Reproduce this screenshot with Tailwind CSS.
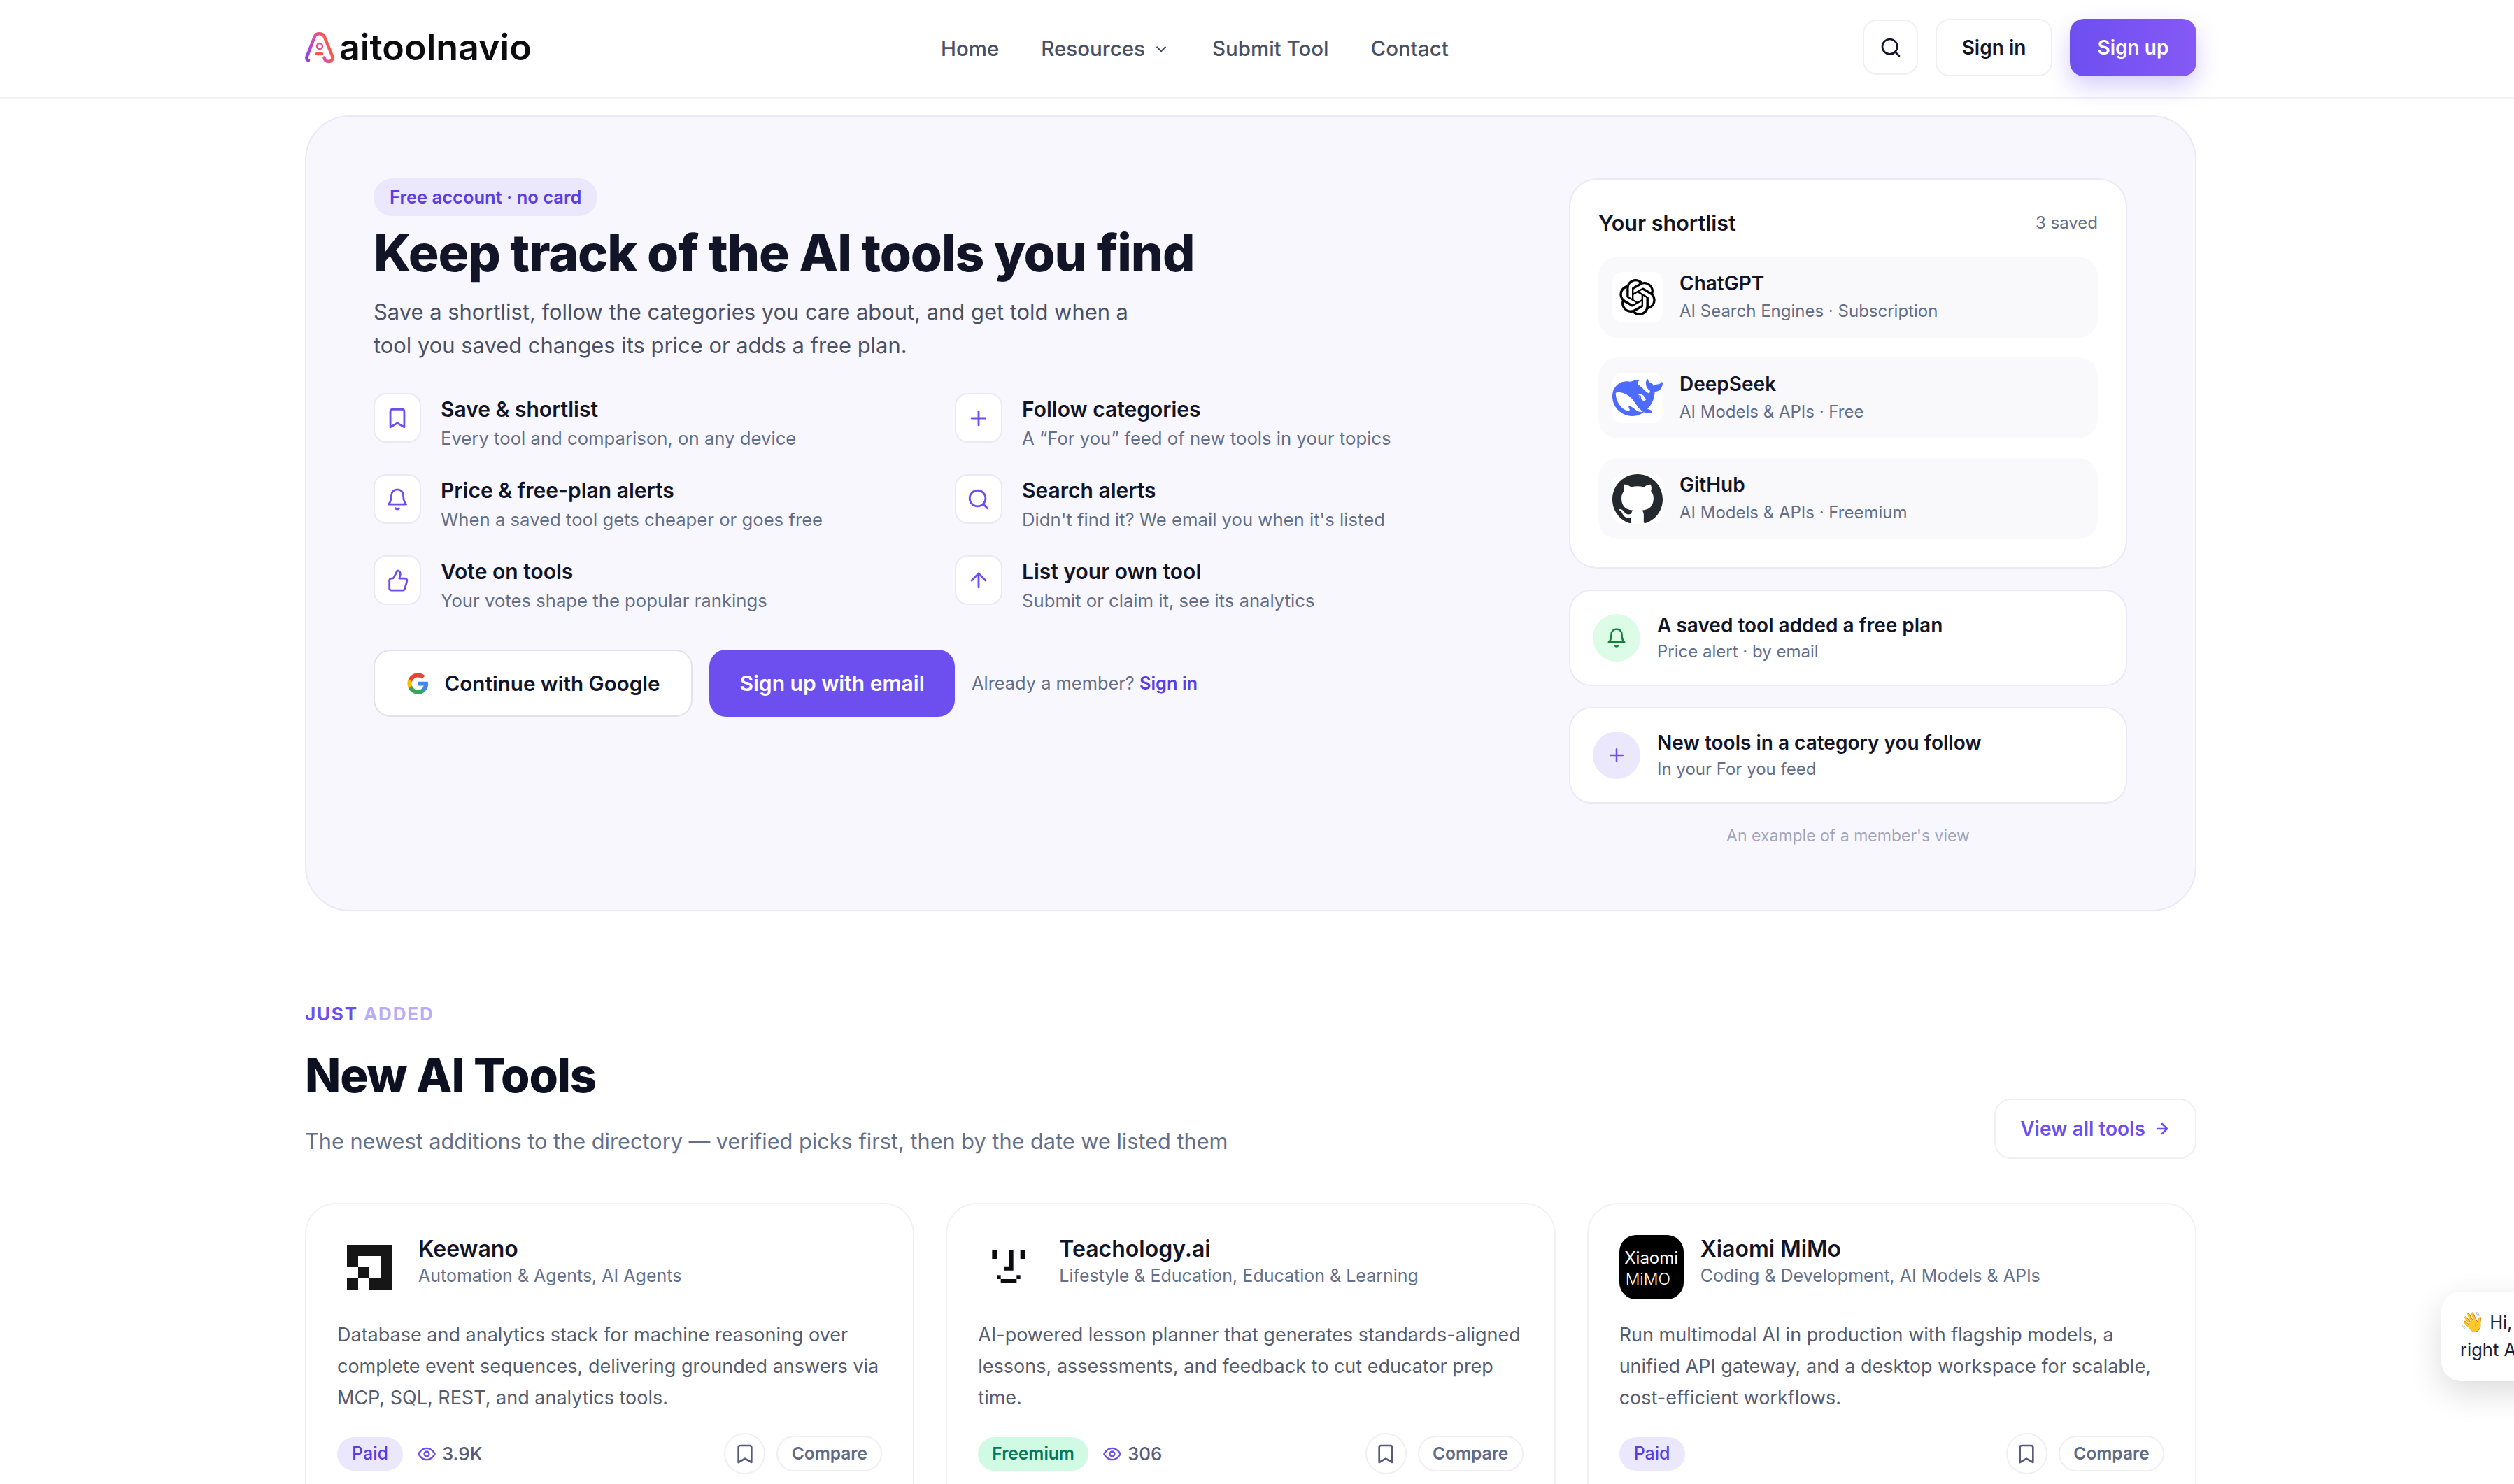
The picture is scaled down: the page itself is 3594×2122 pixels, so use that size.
<!DOCTYPE html>
<html lang="en">
  <head>
    <meta charset="UTF-8" />
    <meta name="viewport" content="width=device-width, initial-scale=1.0" />
    <script src="https://cdn.jsdelivr.net/npm/@tailwindcss/browser@4"></script>
    <title>aitoolnavio</title>
  </head>
  <body class="relative h-[2122px] overflow-hidden bg-white font-['Inter',sans-serif] text-[#111527]">
    <!-- header -->
    <header class="flex h-[141px] items-center justify-between border-b-2 border-[#f2f2f5] pl-[436px] pr-[454px]">
      <a class="-mt-[3px] flex w-[909px] items-center gap-[7px]">
        <svg class="h-[46px] w-[42px]" viewBox="0 0 42 46" fill="none">
          <defs>
            <linearGradient id="lg" x1="0" y1="1" x2="1" y2="0.6">
              <stop offset="0" stop-color="#8b3de8" />
              <stop offset="0.55" stop-color="#d94fb0" />
              <stop offset="1" stop-color="#ff5a3c" />
            </linearGradient>
          </defs>
          <path d="M5 41c-2 0-3-2-2.600-4L14 7c2-5 11-5 13.500 0L39 35c1.500 4-1 8-5 8-5 0-6-3-6.500-5.500" stroke="url(#lg)" stroke-width="4.500" stroke-linecap="round" />
          <path d="M17 32h7" stroke="#ff5a3c" stroke-width="4.500" stroke-linecap="round" />
          <circle cx="21" cy="21" r="4" stroke="#ee4f8f" stroke-width="2.500" />
        </svg>
        <span class="text-[52px] leading-none font-semibold text-[#0b0b10]">aitoolnavio</span>
      </a>
      <nav class="flex items-center gap-[60px] text-[29.5px] font-medium text-[#4a4f63]">
        <a>Home</a>
        <a class="flex items-center gap-[10px]">Resources
          <svg class="h-[26px] w-[26px]" viewBox="0 0 24 24" fill="none" stroke="currentColor" stroke-width="2"><path d="m6 9 6 6 6-6" /></svg>
        </a>
        <a>Submit Tool</a>
        <a>Contact</a>
      </nav>
      <div class="-mt-[4px] flex flex-1 items-center justify-end gap-[25px]">
        <button class="flex h-[79px] w-[79px] items-center justify-center rounded-[20px] border-2 border-[#f0f0f4] bg-white">
          <svg class="h-[32px] w-[32px]" viewBox="0 0 24 24" fill="none" stroke="#111527" stroke-width="2" stroke-linecap="round"><circle cx="11" cy="11" r="8" /><path d="m21 21-4.300-4.300" /></svg>
        </button>
        <button class="h-[82px] w-[167px] rounded-[20px] border-2 border-[#f0f0f4] bg-white text-[28px] font-semibold">Sign in</button>
        <button class="h-[82px] w-[181px] rounded-[20px] bg-gradient-to-r from-[#6d4ff0] to-[#8559f6] text-[28px] font-semibold text-white shadow-[0_14px_32px_rgba(109,79,240,0.28)]">Sign up</button>
      </div>
    </header>

    <main class="px-[436px] pr-[454px] pt-[24px]">
      <!-- hero -->
      <section class="flex h-[1138px] justify-between rounded-[64px] border-2 border-[#ebe9f8] bg-[#f8f7fe] pt-[88px] pr-[97px] pl-[96px]">
        <div class="w-[1662px]">
          <span class="inline-flex h-[54px] items-center rounded-full bg-[#ebe7fd] px-[23px] text-[25.5px] font-semibold text-[#5b3de0]">Free account · no card</span>
          <h1 class="mt-[8px] text-[73px] leading-[90px] font-extrabold tracking-[-0.016em] text-[#111527]">Keep track of the AI tools you find</h1>
          <p class="mt-[15px] w-[1120px] text-[30.9px] leading-[48px] text-[#4b5165]">Save a shortlist, follow the categories you care about, and get told when a tool you saved changes its price or adds a free plan.</p>

          <div class="mt-[44px] grid grid-cols-2 gap-y-[32px]">
            <div class="flex gap-[28px]">
              <span class="flex h-[71px] w-[68px] shrink-0 items-center justify-center rounded-[18px] border-2 border-[#ebe9f8] bg-white">
                <svg class="h-[34px] w-[34px]" viewBox="0 0 24 24" fill="none" stroke="#6d4ff0" stroke-width="2" stroke-linejoin="round"><path d="m19 21-7-4-7 4V5a2 2 0 0 1 2-2h10a2 2 0 0 1 2 2v16z" /></svg>
              </span>
              <div class="pt-[4px]">
                <div class="text-[30px] leading-[38px] font-semibold">Save &amp; shortlist</div>
                <div class="mt-[4px] text-[25.7px] leading-[38px] text-[#646e87]">Every tool and comparison, on any device</div>
              </div>
            </div>
            <div class="flex gap-[28px]">
              <span class="flex h-[71px] w-[68px] shrink-0 items-center justify-center rounded-[18px] border-2 border-[#ebe9f8] bg-white">
                <svg class="h-[34px] w-[34px]" viewBox="0 0 24 24" fill="none" stroke="#6d4ff0" stroke-width="2" stroke-linecap="round"><path d="M5 12h14M12 5v14" /></svg>
              </span>
              <div class="pt-[4px]">
                <div class="text-[30px] leading-[38px] font-semibold">Follow categories</div>
                <div class="mt-[4px] text-[25.7px] leading-[38px] text-[#646e87]">A “For you” feed of new tools in your topics</div>
              </div>
            </div>
            <div class="flex gap-[28px]">
              <span class="flex h-[71px] w-[68px] shrink-0 items-center justify-center rounded-[18px] border-2 border-[#ebe9f8] bg-white">
                <svg class="h-[34px] w-[34px]" viewBox="0 0 24 24" fill="none" stroke="#6d4ff0" stroke-width="2" stroke-linecap="round" stroke-linejoin="round"><path d="M6 8a6 6 0 0 1 12 0c0 7 3 9 3 9H3s3-2 3-9" /><path d="M10.300 21a1.940 1.940 0 0 0 3.400 0" /></svg>
              </span>
              <div class="pt-[4px]">
                <div class="text-[30px] leading-[38px] font-semibold">Price &amp; free-plan alerts</div>
                <div class="mt-[4px] text-[25.7px] leading-[38px] text-[#646e87]">When a saved tool gets cheaper or goes free</div>
              </div>
            </div>
            <div class="flex gap-[28px]">
              <span class="flex h-[71px] w-[68px] shrink-0 items-center justify-center rounded-[18px] border-2 border-[#ebe9f8] bg-white">
                <svg class="h-[34px] w-[34px]" viewBox="0 0 24 24" fill="none" stroke="#6d4ff0" stroke-width="2" stroke-linecap="round"><circle cx="11" cy="11" r="8" /><path d="m21 21-4.300-4.300" /></svg>
              </span>
              <div class="pt-[4px]">
                <div class="text-[30px] leading-[38px] font-semibold">Search alerts</div>
                <div class="mt-[4px] text-[25.7px] leading-[38px] text-[#646e87]">Didn't find it? We email you when it's listed</div>
              </div>
            </div>
            <div class="flex gap-[28px]">
              <span class="flex h-[71px] w-[68px] shrink-0 items-center justify-center rounded-[18px] border-2 border-[#ebe9f8] bg-white">
                <svg class="h-[34px] w-[34px]" viewBox="0 0 24 24" fill="none" stroke="#6d4ff0" stroke-width="2" stroke-linecap="round" stroke-linejoin="round"><path d="M15 5.880 14 10h5.830a2 2 0 0 1 1.920 2.560l-2.330 8A2 2 0 0 1 17.500 22H6a2 2 0 0 1-2-2v-8a2 2 0 0 1 2-2h.760a2 2 0 0 0 1.790-1.110L12 2a3.130 3.130 0 0 1 3 3.880Z" /></svg>
              </span>
              <div class="pt-[4px]">
                <div class="text-[30px] leading-[38px] font-semibold">Vote on tools</div>
                <div class="mt-[4px] text-[25.7px] leading-[38px] text-[#646e87]">Your votes shape the popular rankings</div>
              </div>
            </div>
            <div class="flex gap-[28px]">
              <span class="flex h-[71px] w-[68px] shrink-0 items-center justify-center rounded-[18px] border-2 border-[#ebe9f8] bg-white">
                <svg class="h-[34px] w-[34px]" viewBox="0 0 24 24" fill="none" stroke="#6d4ff0" stroke-width="2" stroke-linecap="round" stroke-linejoin="round"><path d="m5 12 7-7 7 7" /><path d="M12 19V5" /></svg>
              </span>
              <div class="pt-[4px]">
                <div class="text-[30px] leading-[38px] font-semibold">List your own tool</div>
                <div class="mt-[4px] text-[25.7px] leading-[38px] text-[#646e87]">Submit or claim it, see its analytics</div>
              </div>
            </div>
          </div>

          <div class="mt-[51px] flex items-center">
            <button class="flex h-[96px] w-[456px] items-center justify-center gap-[22px] rounded-[24px] border-2 border-[#e3e2ea] bg-white text-[29.6px] font-semibold">
              <svg class="h-[33px] w-[33px]" viewBox="0 0 24 24">
                <path fill="#4285F4" d="M22.560 12.250c0-.780-.070-1.530-.200-2.250H12v4.260h5.920c-.260 1.370-1.040 2.530-2.080 3.230v2.770h3.570c2.080-1.920 3.280-4.740 3.280-8.010z" />
                <path fill="#34A853" d="M12 23c2.970 0 5.460-.980 7.280-2.660l-3.570-2.770c-.980.660-2.230 1.060-3.710 1.060-2.860 0-5.290-1.930-6.160-4.530H2.180v2.840C3.990 20.530 7.700 23 12 23z" />
                <path fill="#FBBC05" d="M5.840 14.090c-.220-.660-.350-1.360-.350-2.090s.130-1.430.350-2.090V7.070H2.180C1.430 8.550 1 10.220 1 12s.430 3.450 1.180 4.930l2.850-2.220.810-.620z" />
                <path fill="#EA4335" d="M12 5.380c1.620 0 3.060.560 4.210 1.640l3.150-3.150C17.450 2.090 14.970 1 12 1 7.700 1 3.990 3.470 2.180 7.070l3.660 2.840c.870-2.600 3.300-4.530 6.160-4.530z" />
              </svg>
              Continue with Google
            </button>
            <button class="ml-[24px] h-[96px] w-[351px] rounded-[24px] bg-[#6d4ff0] text-[30px] font-semibold text-white">Sign up with email</button>
            <span class="ml-[24px] text-[25.4px] text-[#646e87]">Already a member? <a class="font-semibold text-[#5b3de0]">Sign in</a></span>
          </div>
        </div>

        <!-- member preview -->
        <aside class="w-[798px] shrink-0">
          <div class="h-[558px] rounded-[40px] border-2 border-[#ebe9f8] bg-white px-[40px] pt-[39px]">
            <div class="flex items-center justify-between">
              <span class="text-[30.5px] font-semibold">Your shortlist</span>
              <span class="text-[24px] text-[#646e87]">3 saved</span>
            </div>
            <div class="mt-[25px] space-y-[28px]">
              <div class="flex h-[116px] items-center gap-[24px] rounded-[28px] bg-[#f9f9fc] px-[20px]">
                <span class="flex h-[72px] w-[72px] items-center justify-center rounded-[14px] bg-white">
                  <svg class="h-[52px] w-[52px]" viewBox="0 0 24 24" fill="#000"><path d="M22.282 9.821a5.985 5.985 0 0 0-.516-4.911 6.046 6.046 0 0 0-6.510-2.900A6.065 6.065 0 0 0 4.981 4.182a5.985 5.985 0 0 0-3.998 2.900 6.046 6.046 0 0 0 .743 7.097 5.980 5.980 0 0 0 .511 4.911 6.051 6.051 0 0 0 6.515 2.900A5.985 5.985 0 0 0 13.260 24a6.056 6.056 0 0 0 5.772-4.206 5.990 5.990 0 0 0 3.998-2.900 6.056 6.056 0 0 0-.748-7.073zM13.260 22.430a4.476 4.476 0 0 1-2.876-1.041l.142-.081 4.778-2.758a.795.795 0 0 0 .393-.681v-6.737l2.020 1.169a.071.071 0 0 1 .038.052v5.583a4.504 4.504 0 0 1-4.495 4.494zM3.600 18.304a4.471 4.471 0 0 1-.535-3.014l.142.085 4.783 2.759a.771.771 0 0 0 .781 0l5.843-3.369v2.333a.080.080 0 0 1-.033.061L9.740 19.950a4.499 4.499 0 0 1-6.141-1.646zM2.341 7.896a4.485 4.485 0 0 1 2.366-1.973V11.600a.766.766 0 0 0 .388.677l5.814 3.354-2.020 1.169a.076.076 0 0 1-.071 0l-4.830-2.787A4.504 4.504 0 0 1 2.340 7.872zm16.597 3.855-5.833-3.387L15.119 7.200a.076.076 0 0 1 .071 0l4.830 2.791a4.494 4.494 0 0 1-.676 8.105v-5.678a.790.790 0 0 0-.407-.667zm2.010-3.023-.142-.085-4.774-2.782a.776.776 0 0 0-.785 0L9.409 9.230V6.897a.066.066 0 0 1 .028-.061l4.830-2.787a4.499 4.499 0 0 1 6.680 4.660zM8.307 12.863l-2.020-1.164a.080.080 0 0 1-.038-.057V6.074a4.499 4.499 0 0 1 7.376-3.454l-.142.081L8.704 5.459a.795.795 0 0 0-.393.681zm1.097-2.365 2.602-1.500 2.607 1.500v2.999l-2.597 1.500-2.607-1.500Z" /></svg>
                </span>
                <div>
                  <div class="text-[28px] leading-[38px] font-semibold">ChatGPT</div>
                  <div class="mt-[3px] text-[24px] leading-[36px] text-[#646e87]">AI Search Engines · Subscription</div>
                </div>
              </div>
              <div class="flex h-[116px] items-center gap-[24px] rounded-[28px] bg-[#f9f9fc] px-[20px]">
                <span class="flex h-[72px] w-[72px] items-center justify-center rounded-[14px] bg-white">
                  <svg class="h-[72px] w-[72px]" viewBox="0 0 24 24" fill="#4d6bfe"><path d="M23.748 4.482c-.254-.124-.364.113-.512.234-.051.039-.094.090-.137.136-.372.397-.806.657-1.373.626-.829-.046-1.537.214-2.163.848-.133-.782-.575-1.248-1.247-1.548-.352-.156-.708-.311-.955-.650-.172-.241-.219-.510-.305-.774-.055-.160-.110-.323-.293-.350-.200-.031-.278.136-.356.276-.313.572-.434 1.202-.422 1.840.027 1.436.633 2.580 1.838 3.393.137.093.172.187.129.323-.082.280-.180.552-.266.833-.055.179-.137.217-.329.140a5.526 5.526 0 0 1-1.736-1.180c-.857-.828-1.631-1.742-2.597-2.458a11.365 11.365 0 0 0-.689-.471c-.985-.957.130-1.743.388-1.836.270-.098.093-.432-.779-.428-.872.004-1.670.295-2.687.684a3.055 3.055 0 0 1-.465.137 9.597 9.597 0 0 0-2.883-.102c-1.885.210-3.390 1.102-4.497 2.623C.082 8.606-.231 10.684.152 12.850c.403 2.284 1.569 4.175 3.360 5.653 1.858 1.533 3.997 2.284 6.438 2.140 1.482-.085 3.133-.284 4.994-1.860.470.234.962.327 1.780.397.630.059 1.236-.030 1.705-.128.735-.156.684-.837.419-.961-2.155-1.004-1.682-.595-2.113-.926 1.096-1.296 2.746-2.642 3.392-7.003.050-.347.007-.565 0-.845-.004-.170.035-.237.230-.256a4.173 4.173 0 0 0 1.545-.475c1.396-.763 1.960-2.015 2.093-3.517.020-.230-.004-.467-.247-.588zM11.581 18c-2.089-1.642-3.102-2.183-3.520-2.160-.392.024-.321.471-.235.763.090.288.207.486.371.739.114.167.192.416-.113.603-.673.416-1.842-.140-1.897-.167-1.361-.802-2.500-1.860-3.301-3.307-.774-1.393-1.224-2.887-1.298-4.482-.020-.386.093-.522.477-.592a4.696 4.696 0 0 1 1.529-.039c2.132.312 3.946 1.265 5.468 2.774.868.860 1.525 1.887 2.202 2.891.720 1.066 1.494 2.082 2.480 2.914.348.292.625.514.891.677-.802.090-2.140.110-3.054-.614zm1-6.440a.306.306 0 0 1 .415-.287.302.302 0 0 1 .200.288.306.306 0 0 1-.310.307.303.303 0 0 1-.304-.308zm3.110 1.596c-.200.081-.399.151-.590.160a1.245 1.245 0 0 1-.798-.254c-.274-.230-.470-.358-.552-.758a1.730 1.730 0 0 1 .016-.588c.070-.327-.008-.537-.239-.727-.187-.156-.426-.199-.688-.199a.559.559 0 0 1-.254-.078c-.110-.054-.200-.190-.114-.358.028-.054.160-.186.192-.210.356-.202.767-.136 1.146.016.352.144.618.408 1.001.782.391.451.462.576.685.914.176.265.336.537.445.848.067.195-.019.354-.250.452z" /></svg>
                </span>
                <div>
                  <div class="text-[28px] leading-[38px] font-semibold">DeepSeek</div>
                  <div class="mt-[3px] text-[24px] leading-[36px] text-[#646e87]">AI Models &amp; APIs · Free</div>
                </div>
              </div>
              <div class="flex h-[116px] items-center gap-[24px] rounded-[28px] bg-[#f9f9fc] px-[20px]">
                <span class="flex h-[72px] w-[72px] items-center justify-center rounded-[14px] bg-white">
                  <svg class="h-[72px] w-[72px]" viewBox="0 0 24 24" fill="#24292f"><path d="M12 .297c-6.630 0-12 5.373-12 12 0 5.303 3.438 9.800 8.205 11.385.600.113.820-.258.820-.577 0-.285-.010-1.040-.015-2.040-3.338.724-4.042-1.610-4.042-1.610C4.422 18.070 3.633 17.700 3.633 17.700c-1.087-.744.084-.729.084-.729 1.205.084 1.838 1.236 1.838 1.236 1.070 1.835 2.809 1.305 3.495.998.108-.776.417-1.305.760-1.605-2.665-.300-5.466-1.332-5.466-5.930 0-1.310.465-2.380 1.235-3.220-.135-.303-.540-1.523.105-3.176 0 0 1.005-.322 3.300 1.230.960-.267 1.980-.399 3-.405 1.020.006 2.040.138 3 .405 2.280-1.552 3.285-1.230 3.285-1.230.645 1.653.240 2.873.120 3.176.765.840 1.230 1.910 1.230 3.220 0 4.610-2.805 5.625-5.475 5.920.420.360.810 1.096.810 2.220 0 1.606-.015 2.896-.015 3.286 0 .315.210.690.825.570C20.565 22.092 24 17.592 24 12.297c0-6.627-5.373-12-12-12" /></svg>
                </span>
                <div>
                  <div class="text-[28px] leading-[38px] font-semibold">GitHub</div>
                  <div class="mt-[3px] text-[24px] leading-[36px] text-[#646e87]">AI Models &amp; APIs · Freemium</div>
                </div>
              </div>
            </div>
          </div>

          <div class="mt-[30px] flex h-[138px] items-center gap-[24px] rounded-[32px] border-2 border-[#ebe9f8] bg-white px-[32px]">
            <span class="flex h-[68px] w-[68px] items-center justify-center rounded-full bg-[#dcfce7]">
              <svg class="h-[30px] w-[30px]" viewBox="0 0 24 24" fill="none" stroke="#15803d" stroke-width="2" stroke-linecap="round" stroke-linejoin="round"><path d="M6 8a6 6 0 0 1 12 0c0 7 3 9 3 9H3s3-2 3-9" /><path d="M10.300 21a1.940 1.940 0 0 0 3.400 0" /></svg>
            </span>
            <div>
              <div class="text-[28px] leading-[38px] font-semibold">A saved tool added a free plan</div>
              <div class="mt-[1px] text-[24px] leading-[36px] text-[#646e87]">Price alert · by email</div>
            </div>
          </div>
          <div class="mt-[30px] flex h-[138px] items-center gap-[24px] rounded-[32px] border-2 border-[#ebe9f8] bg-white px-[32px]">
            <span class="flex h-[68px] w-[68px] items-center justify-center rounded-full bg-[#ebe7fd]">
              <svg class="h-[30px] w-[30px]" viewBox="0 0 24 24" fill="none" stroke="#6d4ff0" stroke-width="2" stroke-linecap="round"><path d="M5 12h14M12 5v14" /></svg>
            </span>
            <div>
              <div class="text-[28px] leading-[38px] font-semibold">New tools in a category you follow</div>
              <div class="mt-[1px] text-[24px] leading-[36px] text-[#646e87]">In your For you feed</div>
            </div>
          </div>
          <p class="mt-[29px] text-center text-[23px] text-[#9fa5bb]">An example of a member's view</p>
        </aside>
      </section>

      <!-- new tools -->
      <section class="mt-[130px]">
        <div class="flex items-end justify-between">
          <div>
            <div class="text-[26px] leading-[34px] font-bold tracking-[0.07em] text-[#6d4ff0]">JUST <span class="text-[#b9acf8]">ADDED</span></div>
            <h2 class="mt-[31px] text-[67px] leading-[80px] font-extrabold tracking-[-0.016em] text-[#0d1020]">New AI Tools</h2>
            <p class="mt-[32px] text-[30.7px] leading-[44px] text-[#64708a]">The newest additions to the directory — verified picks first, then by the date we listed them</p>
          </div>
          <a class="mb-[-3px] flex h-[86px] w-[289px] items-center justify-center gap-[12px] rounded-[24px] border-2 border-[#f0f0f4] text-[28px] font-semibold text-[#6d4ff0]">View all tools
            <svg class="h-[24px] w-[24px]" viewBox="0 0 24 24" fill="none" stroke="currentColor" stroke-width="2.500" stroke-linecap="round" stroke-linejoin="round"><path d="M5 12h14" /><path d="m12 5 7 7-7 7" /></svg>
          </a>
        </div>

        <div class="mt-[66px] grid grid-cols-3 gap-[45px]">
          <article class="h-[500px] rounded-[44px] border-2 border-[#f1f1f4] bg-white px-[44px] pt-[44px]">
            <div class="flex items-start gap-[24px]">
              <span class="flex h-[92px] w-[92px] shrink-0 items-center justify-center">
                <svg class="h-[64px] w-[64px]" viewBox="0 0 4 4" fill="#161616"><path d="M0 0h4v4H2V3h1V1H1v1H0z" /><path d="M1 2h1v1H1z" /><path d="M0 3h1v1H0z" /></svg>
              </span>
              <div>
                <div class="text-[32px] leading-[40px] font-semibold">Keewano</div>
                <div class="text-[25px] leading-[36px] text-[#64708a]">Automation &amp; Agents, AI Agents</div>
              </div>
            </div>
            <p class="mt-[28px] text-[27px] leading-[45px] text-[#565c6e]">Database and analytics stack for machine reasoning over complete event sequences, delivering grounded answers via MCP, SQL, REST, and analytics tools.</p>
            <div class="mt-[28px] flex items-center">
              <span class="flex h-[48px] items-center rounded-full bg-[#ebe7fd] px-[21px] text-[25px] font-medium text-[#5b3de0]">Paid</span>
              <svg class="ml-[20px] h-[28px] w-[28px]" viewBox="0 0 24 24" fill="none" stroke="#6d4ff0" stroke-width="2"><path d="M2 12s3.500-7 10-7 10 7 10 7-3.500 7-10 7-10-7-10-7Z" /><circle cx="12" cy="12" r="3" /></svg>
              <span class="ml-[8px] text-[26px] font-medium text-[#565c7a]">3.9K</span>
              <button class="ml-auto flex h-[59px] w-[59px] items-center justify-center rounded-full border-2 border-[#f0f0f4]">
                <svg class="h-[32px] w-[32px]" viewBox="0 0 24 24" fill="none" stroke="#565c7a" stroke-width="2" stroke-linejoin="round"><path d="m19 21-7-4-7 4V5a2 2 0 0 1 2-2h10a2 2 0 0 1 2 2v16z" /></svg>
              </button>
              <button class="ml-[16px] h-[51px] w-[151px] rounded-full border-2 border-[#f0f0f4] text-[24.5px] font-semibold text-[#5f6a85]">Compare</button>
            </div>
          </article>

          <article class="h-[500px] rounded-[44px] border-2 border-[#f1f1f4] bg-white px-[44px] pt-[44px]">
            <div class="flex items-start gap-[24px]">
              <span class="flex h-[92px] w-[92px] shrink-0 items-center justify-center">
                <svg class="h-[92px] w-[92px]" viewBox="6 6 276 276" fill="#0b0b10"><path d="M67 70h21v38H67z" /><path d="M188 70h20v38h-20z" /><path d="M138 70h20v88h-38v-18h18z" /><path d="M88 178h16v17H88z" /><path d="M172 178h16v17h-16z" /><path d="M104 195h68v17h-68z" /></svg>
              </span>
              <div>
                <div class="text-[32px] leading-[40px] font-semibold">Teachology.ai</div>
                <div class="text-[25px] leading-[36px] text-[#64708a]">Lifestyle &amp; Education, Education &amp; Learning</div>
              </div>
            </div>
            <p class="mt-[28px] text-[27px] leading-[45px] text-[#565c6e]">AI-powered lesson planner that generates standards-aligned lessons, assessments, and feedback to cut educator prep time.</p>
            <div class="mt-[28px] flex items-center">
              <span class="flex h-[48px] items-center rounded-full bg-[#d1fae5] px-[20px] text-[24.5px] font-semibold text-[#047857]">Freemium</span>
              <svg class="ml-[20px] h-[28px] w-[28px]" viewBox="0 0 24 24" fill="none" stroke="#6d4ff0" stroke-width="2"><path d="M2 12s3.500-7 10-7 10 7 10 7-3.500 7-10 7-10-7-10-7Z" /><circle cx="12" cy="12" r="3" /></svg>
              <span class="ml-[8px] text-[26px] font-medium text-[#565c7a]">306</span>
              <button class="ml-auto flex h-[59px] w-[59px] items-center justify-center rounded-full border-2 border-[#f0f0f4]">
                <svg class="h-[32px] w-[32px]" viewBox="0 0 24 24" fill="none" stroke="#565c7a" stroke-width="2" stroke-linejoin="round"><path d="m19 21-7-4-7 4V5a2 2 0 0 1 2-2h10a2 2 0 0 1 2 2v16z" /></svg>
              </button>
              <button class="ml-[16px] h-[51px] w-[151px] rounded-full border-2 border-[#f0f0f4] text-[24.5px] font-semibold text-[#5f6a85]">Compare</button>
            </div>
          </article>

          <article class="h-[500px] rounded-[44px] border-2 border-[#f1f1f4] bg-white px-[44px] pt-[44px]">
            <div class="flex items-start gap-[24px]">
              <span class="flex h-[92px] w-[92px] shrink-0 flex-col items-center justify-center rounded-[24px] bg-black pt-[4px] text-[24px] leading-[30px] text-white">
                <span>Xiaomi</span>
                <span class="w-full pl-[9px] text-[23px] font-light">MiMO</span>
              </span>
              <div>
                <div class="text-[32px] leading-[40px] font-semibold">Xiaomi MiMo</div>
                <div class="text-[25px] leading-[36px] text-[#64708a]">Coding &amp; Development, AI Models &amp; APIs</div>
              </div>
            </div>
            <p class="mt-[28px] text-[27px] leading-[45px] text-[#565c6e]">Run multimodal AI in production with flagship models, a unified API gateway, and a desktop workspace for scalable, cost-efficient workflows.</p>
            <div class="mt-[28px] flex items-center">
              <span class="flex h-[48px] items-center rounded-full bg-[#ebe7fd] px-[21px] text-[25px] font-medium text-[#5b3de0]">Paid</span>
              <button class="ml-auto flex h-[59px] w-[59px] items-center justify-center rounded-full border-2 border-[#f0f0f4]">
                <svg class="h-[32px] w-[32px]" viewBox="0 0 24 24" fill="none" stroke="#565c7a" stroke-width="2" stroke-linejoin="round"><path d="m19 21-7-4-7 4V5a2 2 0 0 1 2-2h10a2 2 0 0 1 2 2v16z" /></svg>
              </button>
              <button class="ml-[16px] h-[51px] w-[151px] rounded-full border-2 border-[#f0f0f4] text-[24.5px] font-semibold text-[#5f6a85]">Compare</button>
            </div>
          </article>
        </div>
      </section>
    </main>

    <!-- chat bubble, cut off by the window edge -->
    <div class="absolute top-[1847px] left-[3490px] h-[128px] w-[400px] rounded-[28px] bg-white px-[27px] py-[24px] text-[25.5px] leading-[39px] whitespace-nowrap text-[#1d2133] shadow-[0_16px_48px_rgba(0,0,0,0.14)]">
      <div><span class="text-[28px] leading-[28px]">👋</span> Hi, I'm your</div>
      <div>right AI tool</div>
    </div>
  </body>
</html>
